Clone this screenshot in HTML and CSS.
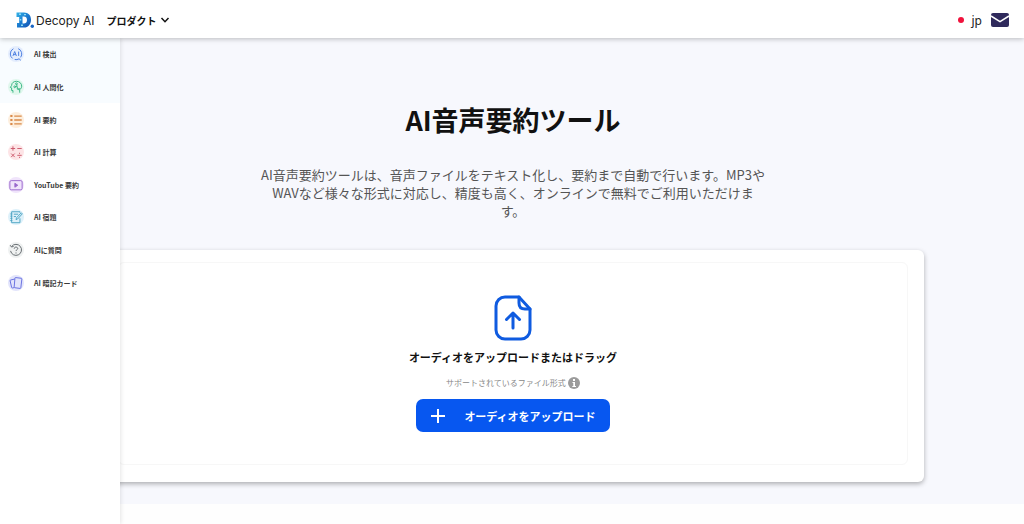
FILE: index.html
```html
<!DOCTYPE html>
<html lang="ja">
<head>
  <meta charset="UTF-8" />
  <meta name="viewport" content="width=device-width, initial-scale=1.0"/>
  <title>AI音声要約ツール | Decopy AI</title>
  <link rel="stylesheet" href="styles.css">
</head>
<body>
  <header class="header">
    <a class="logo" href="#">
      <svg class="logo-mark" viewBox="0 0 18 16" aria-hidden="true">
        <defs>
          <linearGradient id="logoFill" x1="0" y1="0" x2="1" y2="1">
            <stop offset="0" stop-color="#35b3e6"/>
            <stop offset="0.5" stop-color="#1a7bd0"/>
            <stop offset="1" stop-color="#1450b0"/>
          </linearGradient>
        </defs>
        <path fill="url(#logoFill)" fill-rule="evenodd" d="M.5 .5h7.500C12.500 .5 15 3.500 15 7.700S12.500 15.500 8 15.500H1v-4.500h2.200V5H.5zM6.500 4.500v7h1.200c2 0 3.300-1.400 3.300-3.600S9.700 4.500 7.700 4.500z"/>
        <path fill="#8edcf5" d="M3 1.500h2v1.500H3zM8 2h2v1.200H8zM3.800 7h1.500v1.500H3.800zM5 12.500h2V14H5z"/>
        <circle cx="16.300" cy="14.200" r="1.700" fill="#1a66c4"/>
      </svg>
      <span>Decopy AI</span>
    </a>
    <button class="product-btn" type="button">
      プロダクト
      <svg class="chevron" viewBox="0 0 10 10" aria-hidden="true"><path d="M1.500 3l3.500 3.700L8.500 3"/></svg>
    </button>
    <div class="header-right">
      <button class="lang-btn" type="button"><span class="flag"></span>jp</button>
      <a class="mail" href="#" aria-label="メール">
        <svg viewBox="0 0 18 14" aria-hidden="true">
          <rect width="18" height="14" rx="2" fill="#2f2a5c"/>
          <path d="M0 3l9 5.600L18 3" fill="none" stroke="#fff" stroke-width="1.500"/>
        </svg>
      </a>
    </div>
  </header>

  <nav class="side-menu">
    <div class="side-list">
      <a class="side-item tint" href="#">
        <span class="side-icon blue"><svg viewBox="0 0 16 16" aria-hidden="true"><path d="M5 2A6.500 6.500 0 0 0 1.500 8a6.500 6.500 0 0 0 2.500 5M6.500 14.300a6.500 6.500 0 0 0 5-.8l2 1.700M13.300 11.800A6.500 6.500 0 0 0 10.500 1.900M4.500 10.200l2-5 2 5M5.300 8.700h2.500M11 5.200v5"/></svg></span>
        AI 検出
      </a>
      <a class="side-item tint" href="#">
        <span class="side-icon green"><svg viewBox="0 0 16 16" aria-hidden="true"><path d="M4.500 14.500V12H3V9L1.500 8.500 3 6.200C3 3.200 5.500 1.500 8.500 1.500c3.500 0 6 2.500 6 5.500 0 2-1 3-2.300 4v3.500M9 5v2.500H7M9.500 7.500v3h1.500"/><circle cx="8.500" cy="4.300" r="1"/><circle cx="6.500" cy="7.800" r="1"/><circle cx="11.500" cy="10.500" r=".8"/></svg></span>
        AI 人間化
      </a>
      <a class="side-item" href="#">
        <span class="side-icon orange"><svg viewBox="0 0 16 16" aria-hidden="true"><path d="M6 3.500h8.500M6 8h8.500M6 12.500h8.500" stroke-width="1.500"/><path d="M1.500 3.500h2.500M1.500 8h2.500M1.500 12.500h2.500" stroke-width="2.200"/></svg></span>
        AI 要約
      </a>
      <a class="side-item" href="#">
        <span class="side-icon red"><svg viewBox="0 0 16 16" aria-hidden="true"><path d="M2 4h5M4.500 1.500v5M9.500 4h5M2.500 9.800l4 4M6.500 9.800l-4 4M9.500 11.800h5M12 8.900v1.200M12 13.500v1.200"/></svg></span>
        AI 計算
      </a>
      <a class="side-item" href="#">
        <span class="side-icon purple"><svg viewBox="0 0 16 16" aria-hidden="true"><rect x="1" y="3" width="14" height="10.500" rx="1.500"/><path d="M6.700 6v4.500L10 8.300z" fill="currentColor"/></svg></span>
        YouTube 要約
      </a>
      <a class="side-item" href="#">
        <span class="side-icon sky"><svg viewBox="0 0 16 16" aria-hidden="true"><path d="M12.500 3V2H3v12.500h9.500V9.500M1.500 4.500h2.300M1.500 7h2.300M1.500 9.500h2.300M1.500 12h2.300M5.500 4.800h5M5.500 7.500h2.500M8 11l.5-2L14 3.200l1.200 1.200L9.800 10.300z"/></svg></span>
        AI 宿題
      </a>
      <a class="side-item" href="#">
        <span class="side-icon gray"><svg viewBox="0 0 16 16" aria-hidden="true"><path d="M3 4A6.300 6.300 0 1 1 1.800 9M1.300 2.500l1.500 2 2.500-.5M6 6.500C6 4 10 4.200 10 6.300 10 7.700 8 7.700 8 9.200M8 10.800V12"/></svg></span>
        AIに質問
      </a>
      <a class="side-item" href="#">
        <span class="side-icon indigo"><svg viewBox="0 0 16 16" aria-hidden="true"><path d="M7.500 1.800l6.500.8c.5.100.8.400.7.900l-1.200 10c-.1.500-.4.700-.9.700l-6-.8c-.5-.1-.7-.4-.7-.9l.9-10c0-.5.200-.7.700-.7zM6.500 3.500L2 4.500c-.6.100-.8.500-.7 1l1.700 7.600c.1.500.5.700 1 .6l2-.5"/></svg></span>
        AI 暗記カード
      </a>
    </div>
  </nav>

  <main class="hero">
    <h1 class="title">AI音声要約ツール</h1>
    <p class="lead">AI音声要約ツールは、音声ファイルをテキスト化し、要約まで自動で行います。MP3やWAVなど様々な形式に対応し、精度も高く、オンラインで無料でご利用いただけます。</p>

    <section class="card">
      <div class="drop-zone">
        <svg class="file-icon" viewBox="0 0 38 46" aria-hidden="true">
          <path d="M25 2H11a9 9 0 0 0-9 9v24a9 9 0 0 0 9 9h16a9 9 0 0 0 9-9V14z"/>
          <path d="M25 2v6c0 4 2 6 6 6h5M19 33V18M12.500 24.500L19 18l6.500 6.500"/>
        </svg>
        <h2 class="drop-title">オーディオをアップロードまたはドラッグ</h2>
        <p class="formats">サポートされているファイル形式
          <svg class="info" viewBox="0 0 12 12" aria-hidden="true"><circle cx="6" cy="6" r="6" fill="#9b9b9b"/><path d="M5 2h2v2H5zM4.500 5H7v4h1v1H4.300V9h1V6h-.8z" fill="#fff"/></svg>
        </p>
        <button class="upload-btn" type="button">
          <svg class="plus" viewBox="0 0 16 16" aria-hidden="true"><path d="M8 1v14M1 8h14"/></svg>
          <span>オーディオをアップロード</span>
        </button>
      </div>
    </section>
  </main>
</body>
</html>
```
FILE: styles.css
```css
* {
  box-sizing: border-box;
}
body {
  margin: 0;
  font-family: "Noto Sans CJK JP", "Noto Sans", sans-serif;
  color: #111;
  background: #fefefe;
}
a {
  color: inherit;
  text-decoration: none;
}
button {
  font-family: inherit;
  border: none;
  background: none;
  padding: 0;
  cursor: pointer;
}
svg {
  display: block;
}

/* header */
.header {
  position: relative;
  z-index: 3;
  display: flex;
  align-items: center;
  height: 38px;
  padding: 2px 15px 0 16px;
  background: #fff;
  box-shadow: 0 1px 5px rgba(0, 0, 0, 0.25);
}
.logo {
  display: flex;
  align-items: center;
  gap: 2px;
  font-family: Inter, sans-serif;
  font-size: 12px;
  color: #222;
}
.logo-mark {
  width: 18px;
  height: 16px;
}
.product-btn {
  display: flex;
  align-items: center;
  gap: 4px;
  margin-left: 12px;
  font-size: 10px;
  font-weight: 700;
  color: #111;
}
.chevron {
  width: 10px;
  height: 10px;
  fill: none;
  stroke: #111;
  stroke-width: 1.5;
}
.header-right {
  display: flex;
  align-items: center;
  gap: 9px;
  margin-left: auto;
}
.lang-btn {
  display: flex;
  align-items: center;
  gap: 8px;
  font-family: "Noto Sans", sans-serif;
  font-size: 12px;
  color: #222;
}
.flag {
  width: 6px;
  height: 6px;
  border-radius: 50%;
  background: #f0123c;
}
.mail svg {
  width: 18px;
  height: 14px;
}

/* product menu, lies over the page */
.side-menu {
  position: absolute;
  z-index: 2;
  top: 38px;
  bottom: 0;
  left: 0;
  width: 120px;
  background: #fff;
  box-shadow: 1px 0 4px rgba(0, 0, 0, 0.1);
}
.side-list {
  display: grid;
  grid-auto-rows: 1fr;
  height: 261px;
}
.side-item {
  display: flex;
  align-items: center;
  gap: 10px;
  padding-left: 8px;
  font-size: 7px;
  font-weight: 700;
  color: #3a3a3a;
}
.side-item.tint {
  background: #f8fcff;
}
.side-icon {
  width: 16px;
  height: 16px;
  padding: 1px;
  border-radius: 50%;
}
.side-icon svg {
  width: 14px;
  height: 14px;
  fill: none;
  stroke: currentColor;
  stroke-width: 1.1;
}
.blue { color: #4a7de0; background: #e4edfd; }
.green { color: #36b583; background: #e0f7ed; }
.orange { color: #d98a4a; background: #fdeedd; }
.red { color: #cc5a6c; background: #fde4e6; }
.purple { color: #9a68cc; background: #f0e4fb; }
.sky { color: #4fa5c4; background: #def1fa; }
.gray { color: #62686c; background: #eff1f1; }
.indigo { color: #666ee0; background: #e2e4fb; }

/* hero */
.hero {
  padding: 60px 100px 22px 102px;
  background: #f7f8fd;
  text-align: center;
}
.title {
  margin: 0;
  font-size: 27px;
  line-height: 44px;
}
.lead {
  max-width: 506px;
  margin: 24px auto 30px;
  font-size: 13px;
  line-height: 18px;
  color: #555;
}
.card {
  padding: 12px 16px 17px;
  border-radius: 6px;
  background: #fff;
  box-shadow: 0 2px 5px rgba(0, 0, 0, 0.3);
}
.drop-zone {
  display: flex;
  flex-direction: column;
  align-items: center;
  padding: 32px 0;
  border: 1px solid #f7f7f7;
  border-radius: 6px;
}
.file-icon {
  width: 38px;
  height: 46px;
  fill: none;
  stroke: #0f5be0;
  stroke-width: 3;
  stroke-linecap: round;
  stroke-linejoin: round;
}
.drop-title {
  margin: 8px 0;
  font-size: 11px;
  line-height: 16px;
}
.formats {
  display: flex;
  align-items: center;
  gap: 2px;
  margin: 2px 0 8px;
  font-size: 8px;
  line-height: 16px;
  color: #888;
}
.info {
  width: 12px;
  height: 12px;
}
.upload-btn {
  display: flex;
  align-items: center;
  gap: 18px;
  height: 33px;
  padding: 0 14px;
  border-radius: 7px;
  background: #0757f0;
  color: #fff;
  font-size: 11px;
  font-weight: 700;
}
.plus {
  width: 16px;
  height: 16px;
  stroke: #fff;
  stroke-width: 2;
}
```
